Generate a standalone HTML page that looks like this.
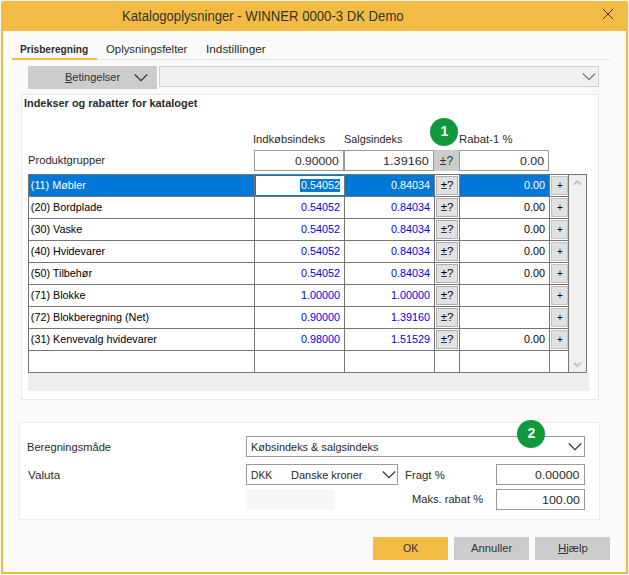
<!DOCTYPE html>
<html><head><meta charset="utf-8">
<style>
*{box-sizing:border-box;margin:0;padding:0}
html,body{width:629px;height:575px;overflow:hidden;background:#f4f6fa}
body{font-family:"Liberation Sans",sans-serif;font-size:12px;color:#222;position:relative}
.a{position:absolute}
.win{left:1px;top:1px;width:627px;height:573px;background:#f2bb44;border-radius:2px 2px 0 0}
.client{left:3px;top:31px;width:623px;height:541px;background:#fafafa}
.t{white-space:nowrap;line-height:14px;color:#2a2a2a;transform-origin:0 0}
.inp{background:#fff;border:1px solid #999}
.btn{background:#ccc}
.row{left:29px;width:539px;height:22px}
.c{position:absolute;top:0;height:22px;line-height:20px;white-space:nowrap;font-size:10.8px}
.n{left:1.8px;color:#000}
.v1{left:226px;width:85px;text-align:right;color:#0000f0}
.v2{left:316px;width:85px;text-align:right;color:#0000f0}
.v3{left:431px;width:85px;text-align:right;color:#000}
.pb{position:absolute;left:407px;top:1px;width:22px;height:19px;background:#e1e1e1;border:1px solid #adadad;text-align:center;line-height:17px;font-size:11.5px;color:#000}
.pl{position:absolute;left:522px;top:1px;width:17px;height:19px;background:#e1e1e1;border:1px solid #c4c4c4;text-align:center;line-height:18px;font-size:10px;padding-left:1px;color:#000}
.hl{height:1px;background:#767676;left:28px;width:541px}
.vl{width:1px;background:#767676;top:174px;height:199px}
.circ{width:28px;height:28px;border-radius:50%;background:#0f993b;color:#fff;text-align:center;font-size:14px;font-weight:bold;line-height:27px}
.w{color:#fff!important}
</style></head><body>
<div class="a win"></div>
<div class="a client"></div>
<svg class="a" style="left:601.2px;top:7px" width="14" height="14" viewBox="0 0 14 14"><path d="M2 2L12 12M12 2L2 12" stroke="#3a2630" stroke-width="0.95" fill="none"/></svg>

<!-- tabs -->
<div class="a" style="left:12px;top:59px;width:598px;height:1px;background:#e4e4e4"></div>
<div class="a" style="left:12px;top:58px;width:85px;height:2px;background:#f2bb44"></div>

<!-- Betingelser -->
<div class="a btn" style="left:28px;top:66px;width:129px;height:23px"></div>
<svg class="a" style="left:133px;top:72px" width="16" height="10" viewBox="0 0 16 10"><path d="M1.8 2.5L8 8.7L14.2 2.5" stroke="#333" stroke-width="1.2" fill="none"/></svg>
<div class="a" style="left:159px;top:66px;width:440px;height:21px;background:#f0f0f0;border:1px solid #d0d0d0"></div>
<svg class="a" style="left:581px;top:71px" width="16" height="10" viewBox="0 0 16 10"><path d="M1.8 2.5L8 8.7L14.2 2.5" stroke="#777" stroke-width="1.2" fill="none"/></svg>

<!-- panel 1 -->
<div class="a" style="left:21px;top:94px;width:578px;height:306px;background:#fff;border:1px solid #e8e8e8"></div>
<div class="a inp" style="left:254px;top:150px;width:90px;height:21px"></div>
<div class="a inp" style="left:344px;top:150px;width:90px;height:21px"></div>
<div class="a btn" style="left:434px;top:150px;width:25px;height:21px;line-height:22px;font-size:12px;text-align:center;color:#333">±?</div>
<div class="a inp" style="left:459px;top:150px;width:90px;height:21px"></div>

<!-- grid -->
<div class="a" style="left:28px;top:174px;width:559px;height:199px;background:#fff"></div>
<div class="a" style="left:29px;top:175px;width:405px;height:21px;background:#0078d7"></div>
<div class="a" style="left:460px;top:175px;width:89px;height:21px;background:#0078d7"></div>
<div class="a" style="left:256px;top:176px;width:88px;height:19px;background:#fff"></div>
<div class="a" style="left:300px;top:179px;width:40px;height:13px;background:#0078d7"></div>
<!-- scrollbar -->
<div class="a" style="left:569px;top:175px;width:17px;height:197px;background:#f0f0f0"></div>
<svg class="a" style="left:572px;top:178.3px" width="11" height="8" viewBox="0 0 11 8"><path d="M2 6.6L5.5 3L9 6.6" stroke="#c2c2c2" stroke-width="1.8" fill="none"/></svg>
<svg class="a" style="left:572px;top:361.3px" width="11" height="8" viewBox="0 0 11 8"><path d="M2 1.6L5.5 5.2L9 1.6" stroke="#c2c2c2" stroke-width="1.8" fill="none"/></svg>

<div class="a hl" style="top:174px;width:559px"></div>
<div class="a hl" style="top:196px"></div>
<div class="a hl" style="top:218px"></div>
<div class="a hl" style="top:240px"></div>
<div class="a hl" style="top:262px"></div>
<div class="a hl" style="top:284px"></div>
<div class="a hl" style="top:306px"></div>
<div class="a hl" style="top:328px"></div>
<div class="a hl" style="top:350px"></div>
<div class="a hl" style="top:372px;width:559px"></div>
<div class="a vl" style="left:28px"></div>
<div class="a vl" style="left:254px"></div>
<div class="a vl" style="left:344px"></div>
<div class="a vl" style="left:434px"></div>
<div class="a vl" style="left:459px"></div>
<div class="a vl" style="left:549px"></div>
<div class="a vl" style="left:568px"></div>
<div class="a vl" style="left:586px"></div>

<div class="a row" style="top:175px"><span class="c n w">(11) Møbler</span><span class="c v1 w">0.54052</span><span class="c v2 w">0.84034</span><span class="pb">±?</span><span class="c v3 w">0.00</span><span class="pl">+</span></div>
<div class="a row" style="top:197px"><span class="c n">(20) Bordplade</span><span class="c v1">0.54052</span><span class="c v2">0.84034</span><span class="pb">±?</span><span class="c v3">0.00</span><span class="pl">+</span></div>
<div class="a row" style="top:219px"><span class="c n">(30) Vaske</span><span class="c v1">0.54052</span><span class="c v2">0.84034</span><span class="pb">±?</span><span class="c v3">0.00</span><span class="pl">+</span></div>
<div class="a row" style="top:241px"><span class="c n">(40) Hvidevarer</span><span class="c v1">0.54052</span><span class="c v2">0.84034</span><span class="pb">±?</span><span class="c v3">0.00</span><span class="pl">+</span></div>
<div class="a row" style="top:263px"><span class="c n">(50) Tilbehør</span><span class="c v1">0.54052</span><span class="c v2">0.84034</span><span class="pb">±?</span><span class="c v3">0.00</span><span class="pl">+</span></div>
<div class="a row" style="top:285px"><span class="c n">(71) Blokke</span><span class="c v1">1.00000</span><span class="c v2">1.00000</span><span class="pb">±?</span><span class="pl">+</span></div>
<div class="a row" style="top:307px"><span class="c n">(72) Blokberegning (Net)</span><span class="c v1">0.90000</span><span class="c v2">1.39160</span><span class="pb">±?</span><span class="pl">+</span></div>
<div class="a row" style="top:329px"><span class="c n">(31) Kenvevalg hvidevarer</span><span class="c v1">0.98000</span><span class="c v2">1.51529</span><span class="pb">±?</span><span class="c v3">0.00</span><span class="pl">+</span></div>

<div class="a" style="left:28px;top:373px;width:561px;height:18px;background:#efefef"></div>

<!-- panel 2 -->
<div class="a" style="left:19px;top:422px;width:581px;height:98px;background:#fff;border:1px solid #ececec"></div>
<div class="a inp" style="left:246px;top:436px;width:339px;height:21px"></div>
<svg class="a" style="left:566.8px;top:441px" width="16" height="10" viewBox="0 0 16 10"><path d="M1.8 2.5L8 8.7L14.2 2.5" stroke="#333" stroke-width="1.2" fill="none"/></svg>
<div class="a inp" style="left:246px;top:464px;width:152px;height:21px"></div>
<svg class="a" style="left:381px;top:469px" width="16" height="10" viewBox="0 0 16 10"><path d="M1.8 2.5L8 8.7L14.2 2.5" stroke="#333" stroke-width="1.2" fill="none"/></svg>
<div class="a inp" style="left:496px;top:464px;width:89px;height:21px"></div>
<div class="a" style="left:246px;top:489px;width:89px;height:21px;background:#f7f7f7"></div>
<div class="a inp" style="left:496px;top:489px;width:89px;height:21px"></div>

<!-- circles -->
<div class="a circ" style="left:430.4px;top:118.4px">1</div>
<div class="a circ" style="left:517.4px;top:420.4px">2</div>

<!-- buttons -->
<div class="a btn" style="left:373px;top:537px;width:75px;height:23px;background:#f2bb44"></div>
<div class="a btn" style="left:454px;top:537px;width:75px;height:23px"></div>
<div class="a btn" style="left:535px;top:537px;width:75px;height:23px"></div>
<div class="a t" id="title" style="left:122.34px;top:8.4px;font-size:14px;color:#333;line-height:16px;transform:scaleX(0.9377)">Katalogoplysninger - WINNER 0000-3 DK Demo</div>
<div class="a t" id="tab1" style="left:19.89px;top:42px;font-size:11.5px;font-weight:bold;color:#2c2c2c;transform:scaleX(0.8802)">Prisberegning</div>
<div class="a t" id="tab2" style="left:105.52px;top:42px;font-size:11.5px;;transform:scaleX(0.9869)">Oplysningsfelter</div>
<div class="a t" id="tab3" style="left:205.75px;top:42px;font-size:11.5px;;transform:scaleX(1.0275)">Indstillinger</div>
<div class="a t" id="bet" style="left:64.50px;top:70px;font-size:11.5px;color:#333;transform:scaleX(0.9587)"><u>B</u>etingelser</div>
<div class="a t" id="head" style="left:23.74px;top:95.6px;font-size:11.5px;font-weight:bold;color:#2c2c2c;transform:scaleX(0.9484)">Indekser og rabatter for kataloget</div>
<div class="a t" id="ind" style="left:253.01px;top:132px;font-size:11.5px;;transform:scaleX(0.9712)">Indkøbsindeks</div>
<div class="a t" id="sal" style="left:343.88px;top:132px;font-size:11.5px;;transform:scaleX(0.9415)">Salgsindeks</div>
<div class="a t" id="rab" style="left:458.82px;top:132px;font-size:11.5px;;transform:scaleX(0.9840)">Rabat-1 %</div>
<div class="a t" id="prod" style="left:27.73px;top:153px;font-size:11.5px;;transform:scaleX(0.9724)">Produktgrupper</div>
<div class="a t" id="ber" style="left:27.13px;top:440.2px;font-size:11.5px;;transform:scaleX(0.9664)">Beregningsmåde</div>
<div class="a t" id="val" style="left:27.94px;top:468.1px;font-size:11.5px;;transform:scaleX(1.0142)">Valuta</div>
<div class="a t" id="kob" style="left:250.80px;top:440px;font-size:11.5px;;transform:scaleX(0.9498)">Købsindeks &amp; salgsindeks</div>
<div class="a t" id="dkk" style="left:250.85px;top:468px;font-size:11.5px;;transform:scaleX(0.8966)">DKK</div>
<div class="a t" id="dan" style="left:291.04px;top:468px;font-size:11.5px;;transform:scaleX(0.9557)">Danske kroner</div>
<div class="a t" id="fra" style="left:404.71px;top:468.2px;font-size:11.5px;;transform:scaleX(0.9885)">Fragt %</div>
<div class="a t" id="mak" style="left:411.73px;top:492.3px;font-size:11.5px;;transform:scaleX(0.9662)">Maks. rabat %</div>
<div class="a t" id="ok" style="left:402.85px;top:541px;font-size:11.5px;color:#333;transform:scaleX(0.9262)">OK</div>
<div class="a t" id="ann" style="left:470.98px;top:541px;font-size:11.5px;color:#333;transform:scaleX(0.9775)">Annuller</div>
<div class="a t" id="hj" style="left:557.60px;top:541px;font-size:11.5px;color:#333;transform:scaleX(0.9961)"><u>H</u>jælp</div>
<div class="a t" id="n1" style="left:294.68px;top:154px;font-size:11.5px;;transform:scaleX(1.0523)">0.90000</div>
<div class="a t" id="n2" style="left:382.98px;top:154px;font-size:11.5px;;transform:scaleX(1.1030)">1.39160</div>
<div class="a t" id="n3" style="left:520.07px;top:154px;font-size:11.5px;;transform:scaleX(1.0750)">0.00</div>
<div class="a t" id="n4" style="left:535.17px;top:468px;font-size:11.5px;;transform:scaleX(1.0669)">0.00000</div>
<div class="a t" id="n5" style="left:541.71px;top:493px;font-size:11.5px;;transform:scaleX(1.0779)">100.00</div>
</body></html>
